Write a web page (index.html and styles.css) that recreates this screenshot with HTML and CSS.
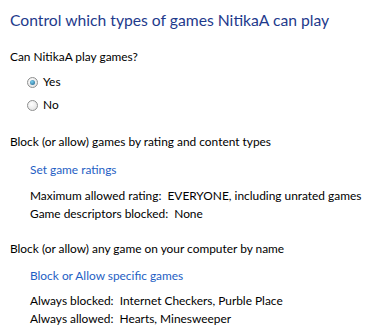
FILE: index.html
```html
<!DOCTYPE html>
<html lang="en">
<head>
    <meta charset="UTF-8">
    <title>Game Controls</title>
    <link rel="stylesheet" href="styles.css">
</head>
<body>
    <div class="page">
        <h1>Control which types of games NitikaA can play</h1>

        <p class="label first">Can NitikaA play games?</p>
        <div class="options">
            <label class="radio"><span class="dot checked"></span>Yes</label>
            <label class="radio"><span class="dot"></span>No</label>
        </div>

        <p class="label section">Block (or allow) games by rating and content types</p>
        <div class="indent">
            <a class="link">Set game ratings</a>
            <div class="info">
                <div>Maximum allowed rating:&nbsp; EVERYONE, including unrated games</div>
                <div>Game descriptors blocked:&nbsp; None</div>
            </div>
        </div>

        <p class="label section2">Block (or allow) any game on your computer by name</p>
        <div class="indent tight">
            <a class="link">Block or Allow specific games</a>
            <div class="info">
                <div>Always blocked:&nbsp; Internet Checkers, Purble Place</div>
                <div>Always allowed:&nbsp; Hearts, Minesweeper</div>
            </div>
        </div>
    </div>
</body>
</html>
```

FILE: styles.css
```css
body {
    margin: 0;
    background-color: #fff;
    font-family: Lato, 'Noto Sans', sans-serif;
    font-size: 11.9px;
    color: #000;
}
.page {
    padding: 8px 0 0 10px;
    white-space: nowrap;
}
h1 {
    margin: 0;
    font-size: 15.7px;
    font-weight: normal;
    color: #1e3a8c;
    line-height: 24px;
}
.label {
    margin: 0;
    line-height: 18px;
}
.first {
    margin-top: 16px;
}
.options {
    display: flex;
    flex-direction: column;
    gap: 5px;
    margin: 7px 0 0 17px;
}
.radio {
    display: flex;
    align-items: center;
    gap: 5px;
    line-height: 18px;
}
.dot {
    width: 11px;
    height: 11px;
    border-radius: 50%;
    border: 1px solid #8e8f8f;
    background: radial-gradient(circle at 40% 35%, #fff, #dcdcdc);
    box-sizing: border-box;
    position: relative;
}
.dot.checked::after {
    content: '';
    position: absolute;
    left: 2px;
    top: 2px;
    width: 5px;
    height: 5px;
    border-radius: 50%;
    background: radial-gradient(circle at 40% 35%, #7ad0f0, #1b5d86);
}
.section {
    margin-top: 19px;
}
.section2 {
    margin-top: 17px;
}
.indent {
    padding-left: 20px;
}
.link {
    display: block;
    color: #1e5ec4;
    margin-top: 10px;
    line-height: 18px;
}
.info {
    margin-top: 8px;
    line-height: 18px;
}
.tight .link {
    margin-top: 9px;
}
.tight .info {
    margin-top: 7px;
}
```
